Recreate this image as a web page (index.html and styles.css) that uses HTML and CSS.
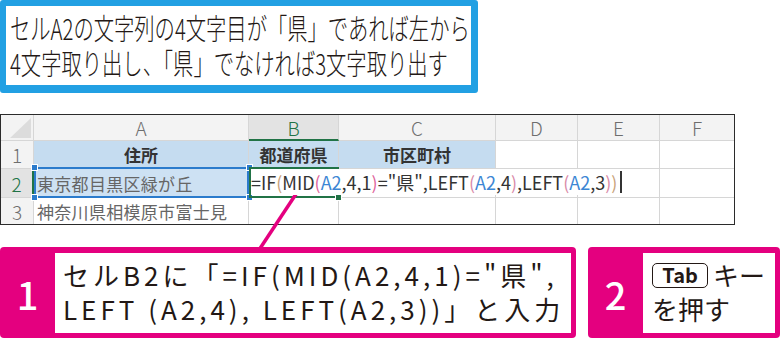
FILE: index.html
```html
<!DOCTYPE html>
<html lang="ja">
<head>
    <meta charset="UTF-8">
    <title>LEFT関数とIF関数</title>
    <link rel="stylesheet" href="styles.css">
</head>
<body>
<div class="page">
    <!-- 問題文 -->
    <div class="question">
        <p class="q-text">セルA2の文字列の4文字目が「県」であれば左から<br>4文字取り出し、「県」でなければ3文字取り出す</p>
    </div>

    <!-- ワークシート -->
    <div class="sheet">
        <div class="cell hd corner"></div>
        <div class="cell hd col">A</div>
        <div class="cell hd col col-active">B</div>
        <div class="cell hd col">C</div>
        <div class="cell hd col">D</div>
        <div class="cell hd col">E</div>
        <div class="cell hd col last">F</div>

        <div class="cell hd rn">1</div>
        <div class="cell fill title">住所</div>
        <div class="cell fill title">都道府県</div>
        <div class="cell fill title">市区町村</div>
        <div class="cell"></div>
        <div class="cell"></div>
        <div class="cell last"></div>

        <div class="cell hd rn row-active">2</div>
        <div class="cell fill-light val a2">
            東京都目黒区緑が丘
            <span class="ref-box"></span>
            <span class="handle h-tl"></span>
            <span class="handle h-tr"></span>
            <span class="handle h-bl"></span>
            <span class="handle h-br"></span>
        </div>
        <div class="cell b2">
            <span class="edit-frame"></span>
            <span class="edit-handle"></span>
            <span class="formula">=IF<span class="p1">(</span>MID<span class="p2">(</span><span class="ref">A2</span>,4,1<span class="p2">)</span>="県",LEFT<span class="p3">(</span><span class="ref">A2</span>,4<span class="p3">)</span>,LEFT<span class="p3">(</span><span class="ref">A2</span>,3<span class="p3">)</span><span class="p1">)</span><span class="caret"></span></span>
        </div>
        <div class="cell"></div>
        <div class="cell"></div>
        <div class="cell"></div>
        <div class="cell last"></div>

        <div class="cell hd rn bottom">3</div>
        <div class="cell val bottom">神奈川県相模原市富士見</div>
        <div class="cell bottom"></div>
        <div class="cell bottom"></div>
        <div class="cell bottom"></div>
        <div class="cell bottom"></div>
        <div class="cell bottom last"></div>
    </div>

    <!-- 手順 -->
    <div class="steps">
        <div class="step step-1">
            <div class="step-num">1</div>
            <div class="step-body">セルB2に「=IF(MID(A2,4,1)="県",<br>LEFT (A2,4), LEFT(A2,3))」と入力</div>
        </div>
        <div class="step step-2">
            <div class="step-num">2</div>
            <div class="step-body step-body-2"><span class="key">Tab</span>キー<br>を押す</div>
        </div>
    </div>

    <!-- 引き出し線 -->
    <svg class="leader" width="783" height="340" viewBox="0 0 783 340">
        <line x1="298" y1="191" x2="259" y2="250" stroke="#e4007f" stroke-width="3.5"/>
    </svg>
</div>
</body>
</html>
```

FILE: styles.css
```css
body { margin: 0; background: #fff; color: #231815; font-family: "Noto Sans CJK JP", "Noto Sans", sans-serif; }
.page { position: relative; width: 783px; height: 340px; overflow: hidden; }

/* 問題文 */
.question { width: 478px; height: 93px; box-sizing: border-box; border: solid #22a0e3; border-width: 6px 7px 8px 6px; border-radius: 3px; padding: 4px 0 0 4px; }
.q-text { margin: 0; font-size: 29px; line-height: 35px; font-weight: 300; white-space: nowrap; transform: scaleX(0.7); transform-origin: left top; }

/* シート */
.sheet { position: relative; margin-top: 21px; width: 735px; box-sizing: border-box; border: 1px solid #2b2b2b; display: grid; grid-template-columns: 33px 215px 90px 157px 82px 82px 74px; grid-template-rows: 26px 28px 29px 26px; font-size: 17px; }
.cell { box-sizing: border-box; border-right: 1px solid #d6d6d6; border-bottom: 1px solid #d6d6d6; display: flex; align-items: center; white-space: nowrap; color: #555; }
.cell.last { border-right: none; }
.cell.bottom { border-bottom: none; }
.hd { background: #f3f3f3; color: #6e6e6e; font-weight: 300; font-size: 19px; justify-content: center; }
.corner { position: relative; }
.corner::after { content: ""; position: absolute; left: 9px; top: 3px; width: 21px; height: 20px; background: #dcdcdc; clip-path: polygon(100% 0, 100% 100%, 0 100%); }
.col-active { background: #e3e3e3; color: #217346; border-bottom: 2px solid #217346; }
.rn { font-size: 19px; }
.row-active { background: #e3e3e3; color: #217346; border-right: 2px solid #217346; }
.fill { background: #c5dcf0; }
.fill-light { background: #cde1f3; }
.title { justify-content: center; font-weight: 700; color: #333; }
.val { padding-left: 3px; color: #666; letter-spacing: 0.3px; }

/* 参照セルの枠 */
.a2 { position: relative; }
.ref-box { position: absolute; left: 0; top: -2px; right: -1px; bottom: -1px; border: 2px solid #2b7bcc; }
.handle { position: absolute; width: 5px; height: 5px; background: #2b7bcc; border: 1px solid #fff; }
.h-tl { left: -3px; top: -5px; }
.h-tr { right: -5px; top: -5px; }
.h-bl { left: -3px; bottom: -4px; }
.h-br { right: -5px; bottom: -4px; }

/* 編集中のセル */
.b2 { position: relative; }
.edit-frame { position: absolute; left: 0; top: -2px; right: -1px; bottom: -1px; border: 2px solid #217346; border-right: none; }
.edit-handle { position: absolute; right: -4px; bottom: -4px; width: 5px; height: 5px; background: #217346; border: 1px solid #fff; z-index: 2; }
.formula { position: absolute; left: 2px; top: 0; height: 26px; width: 372px; background: #fff; display: flex; align-items: center; font-size: 18px; color: #333; z-index: 1; }
.p1 { color: #c9a27a; }
.p2 { color: #e0649b; }
.p3 { color: #d98aa8; }
.ref { color: #3c86d4; }
.caret { display: inline-block; width: 1.5px; height: 22px; background: #333; margin-left: 3px; }

/* 手順 */
.steps { display: flex; gap: 12px; margin-top: 22px; }
.step { display: flex; height: 91px; box-sizing: border-box; padding: 6px 5px 5px 0; background: #e4007f; border-radius: 4px; }
.step-1 { width: 576px; }
.step-2 { width: 192px; }
.step-num { width: 55px; display: flex; align-items: center; justify-content: center; color: #fff; font-size: 38px; font-weight: 500; }
.step-body { flex: 1; background: #fff; padding: 5px 0 0 8px; font-size: 26px; line-height: 34px; letter-spacing: 4px; white-space: nowrap; }
.step-body-2 { padding-left: 9px; letter-spacing: 0; }
.key { display: inline-block; width: 56px; height: 25px; box-sizing: border-box; border: 1.5px solid #231815; border-radius: 5px; font-size: 20px; line-height: 22px; font-weight: 700; text-align: center; vertical-align: 3px; margin-right: 5px; letter-spacing: 0; }

.leader { position: absolute; left: 0; top: 0; pointer-events: none; }
```
